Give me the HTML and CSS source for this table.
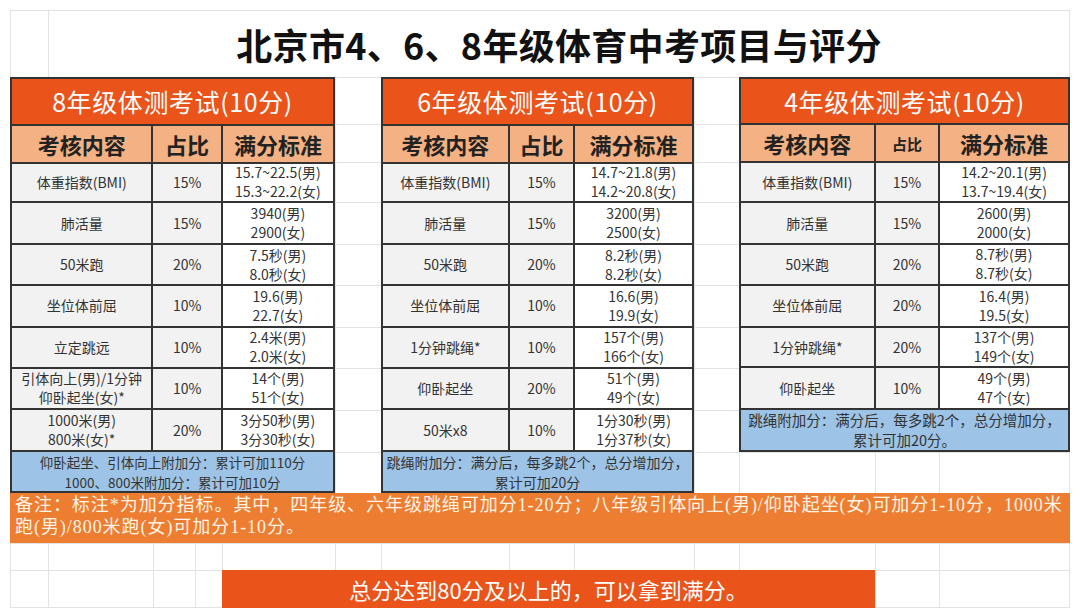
FILE: index.html
```html
<!DOCTYPE html>
<html lang="zh-CN">
<head>
<meta charset="utf-8">
<title>北京市4、6、8年级体育中考项目与评分</title>
<link rel="stylesheet" href="styles.css">
</head>
<body>
<main class="sheet">
  <h1 class="title">北京市4、6、8年级体育中考项目与评分</h1>

  <section class="tbl t8">
    <div class="cap">8年级体测考试(10分)</div>
    <div class="th">考核内容</div><div class="th">占比</div><div class="th">满分标准</div>
    <div class="td">体重指数(BMI)</div><div class="td">15%</div><div class="td std">15.7~22.5(男)<br>15.3~22.2(女)</div>
    <div class="td">肺活量</div><div class="td">15%</div><div class="td std">3940(男)<br>2900(女)</div>
    <div class="td">50米跑</div><div class="td">20%</div><div class="td std">7.5秒(男)<br>8.0秒(女)</div>
    <div class="td">坐位体前屈</div><div class="td">10%</div><div class="td std">19.6(男)<br>22.7(女)</div>
    <div class="td">立定跳远</div><div class="td">10%</div><div class="td std">2.4米(男)<br>2.0米(女)</div>
    <div class="td">引体向上(男)/1分钟<br>仰卧起坐(女)*</div><div class="td">10%</div><div class="td std">14个(男)<br>51个(女)</div>
    <div class="td">1000米(男)<br>800米(女)*</div><div class="td">20%</div><div class="td std">3分50秒(男)<br>3分30秒(女)</div>
    <div class="extra ex8">仰卧起坐、引体向上附加分：累计可加110分<br>1000、800米附加分：累计可加10分</div>
  </section>

  <section class="tbl t6">
    <div class="cap">6年级体测考试(10分)</div>
    <div class="th">考核内容</div><div class="th">占比</div><div class="th">满分标准</div>
    <div class="td">体重指数(BMI)</div><div class="td">15%</div><div class="td std">14.7~21.8(男)<br>14.2~20.8(女)</div>
    <div class="td">肺活量</div><div class="td">15%</div><div class="td std">3200(男)<br>2500(女)</div>
    <div class="td">50米跑</div><div class="td">20%</div><div class="td std">8.2秒(男)<br>8.2秒(女)</div>
    <div class="td">坐位体前屈</div><div class="td">10%</div><div class="td std">16.6(男)<br>19.9(女)</div>
    <div class="td">1分钟跳绳*</div><div class="td">10%</div><div class="td std">157个(男)<br>166个(女)</div>
    <div class="td">仰卧起坐</div><div class="td">20%</div><div class="td std">51个(男)<br>49个(女)</div>
    <div class="td">50米x8</div><div class="td">10%</div><div class="td std">1分30秒(男)<br>1分37秒(女)</div>
    <div class="extra ex6">跳绳附加分：满分后，每多跳2个，总分增加分，<br>累计可加20分</div>
  </section>

  <section class="tbl t4">
    <div class="cap">4年级体测考试(10分)</div>
    <div class="th">考核内容</div><div class="th small">占比</div><div class="th">满分标准</div>
    <div class="td">体重指数(BMI)</div><div class="td">15%</div><div class="td std">14.2~20.1(男)<br>13.7~19.4(女)</div>
    <div class="td">肺活量</div><div class="td">15%</div><div class="td std">2600(男)<br>2000(女)</div>
    <div class="td">50米跑</div><div class="td">20%</div><div class="td std">8.7秒(男)<br>8.7秒(女)</div>
    <div class="td">坐位体前屈</div><div class="td">20%</div><div class="td std">16.4(男)<br>19.5(女)</div>
    <div class="td">1分钟跳绳*</div><div class="td">20%</div><div class="td std">137个(男)<br>149个(女)</div>
    <div class="td">仰卧起坐</div><div class="td">10%</div><div class="td std">49个(男)<br>47个(女)</div>
    <div class="extra">跳绳附加分：满分后，每多跳2个，总分增加分，<br>累计可加20分。</div>
  </section>

  <p class="note">备注：标注*为加分指标。其中，四年级、六年级跳绳可加分1-20分；八年级引体向上(男)/仰卧起坐(女)可加分1-10分，1000米<br>跑(男)/800米跑(女)可加分1-10分。</p>

  <p class="total">总分达到80分及以上的，可以拿到满分。</p>
</main>
</body>
</html>
```

FILE: styles.css
```css
* { box-sizing: border-box; }

body {
  margin: 0;
  background: #ffffff;
  font-family: "Noto Sans CJK SC", "Noto Sans", sans-serif;
  color: #333333;
}

.sheet {
  --g: linear-gradient(#e3e3e3, #e3e3e3);
  margin: 10px 0 0 10px;
  width: 1060px;
  height: 598px;
  display: grid;
  grid-template-columns: 38px 105px 42px 27px 113px 46px 128px 65px 120px 45px 136px 64px 131px;
  grid-template-rows: 67px 47px 38px 40px 42px 41px 42px 41px 42px 42px 41px 50px 27px 38px;
  background-repeat: no-repeat;
  background-image:
    var(--g), var(--g), var(--g), var(--g), var(--g), var(--g), var(--g),
    var(--g), var(--g), var(--g), var(--g), var(--g), var(--g), var(--g),
    var(--g), var(--g), var(--g), var(--g), var(--g), var(--g), var(--g),
    var(--g), var(--g), var(--g), var(--g), var(--g), var(--g), var(--g),
    var(--g);
  background-size:
    1px 598px, 1px 598px, 1px 598px, 1px 598px, 1px 598px, 1px 598px, 1px 598px,
    1px 598px, 1px 598px, 1px 598px, 1px 598px, 1px 598px, 1px 598px, 1px 598px,
    1060px 1px, 1060px 1px, 1060px 1px, 1060px 1px, 1060px 1px, 1060px 1px, 1060px 1px,
    1060px 1px, 1060px 1px, 1060px 1px, 1060px 1px, 1060px 1px, 1060px 1px, 1060px 1px,
    1060px 1px;
  background-position:
    0 0, 38px 0, 143px 0, 185px 0, 212px 0, 325px 0, 371px 0,
    499px 0, 564px 0, 684px 0, 729px 0, 865px 0, 929px 0, 1059px 0,
    0 0, 0 67px, 0 114px, 0 152px, 0 192px, 0 234px, 0 275px,
    0 317px, 0 358px, 0 400px, 0 442px, 0 483px, 0 533px, 0 560px,
    0 597px;
}

.title {
  grid-column: 2 / 14;
  grid-row: 1;
  margin: 0;
  background: #ffffff;
  border: 1px solid #e3e3e3;
  border-bottom: 0;
  display: flex;
  align-items: center;
  justify-content: center;
  font-size: 36px;
  font-weight: 700;
  color: #111111;
  letter-spacing: 0.3px;
}

.tbl {
  display: grid;
  background: #333333;
  gap: 2px;
  padding: 2px;
}

.t8 {
  grid-column: 1 / 6;
  grid-row: 2 / 12;
  grid-template-columns: 143fr 69fr 113fr;
  grid-template-rows: 47fr 38fr 40fr 42fr 41fr 42fr 41fr 42fr 42fr 41fr;
}

.t6 {
  grid-column: 7 / 10;
  grid-row: 2 / 12;
  grid-template-columns: 128fr 65fr 120fr;
  grid-template-rows: 47fr 38fr 40fr 42fr 41fr 42fr 41fr 42fr 42fr 41fr;
}

.t4 {
  grid-column: 11 / 14;
  grid-row: 2 / 11;
  grid-template-columns: 136fr 64fr 131fr;
  grid-template-rows: 47fr 38fr 40fr 42fr 41fr 42fr 41fr 42fr 42fr;
}

.cap, .th, .td, .extra {
  display: flex;
  align-items: center;
  justify-content: center;
  text-align: center;
  min-width: 0;
  min-height: 0;
}

.cap {
  grid-column: 1 / -1;
  background: #ea5319;
  color: #ffffff;
  font-size: 25px;
  letter-spacing: 0.6px;
}

.th {
  background: #f4b183;
  color: #222222;
  font-size: 22px;
  font-weight: 700;
}

.th.small {
  font-size: 15px;
}

.td {
  background: #f2f2f2;
  font-size: 14px;
  line-height: 19px;
  color: #333333;
}

.td.std {
  background: #ffffff;
}

.extra {
  grid-column: 1 / -1;
  background: #9dc3e6;
  font-size: 14.5px;
  line-height: 20px;
  color: #333333;
  white-space: nowrap;
}

.extra.ex8 {
  font-size: 13.5px;
}

.extra.ex6 {
  font-size: 14px;
}

.note {
  grid-column: 1 / 14;
  grid-row: 12;
  margin: 0;
  background: #ed7d31;
  color: #fff4e6;
  font-family: "Liberation Serif", "Noto Sans CJK SC", serif;
  font-size: 18px;
  line-height: 22px;
  letter-spacing: 0.95px;
  white-space: nowrap;
  padding: 1px 5px 0;
}

.total {
  grid-column: 5 / 12;
  grid-row: 14;
  margin: 0;
  background: #ea5319;
  color: #ffffff;
  font-size: 22px;
  display: flex;
  align-items: center;
  justify-content: center;
}
```
